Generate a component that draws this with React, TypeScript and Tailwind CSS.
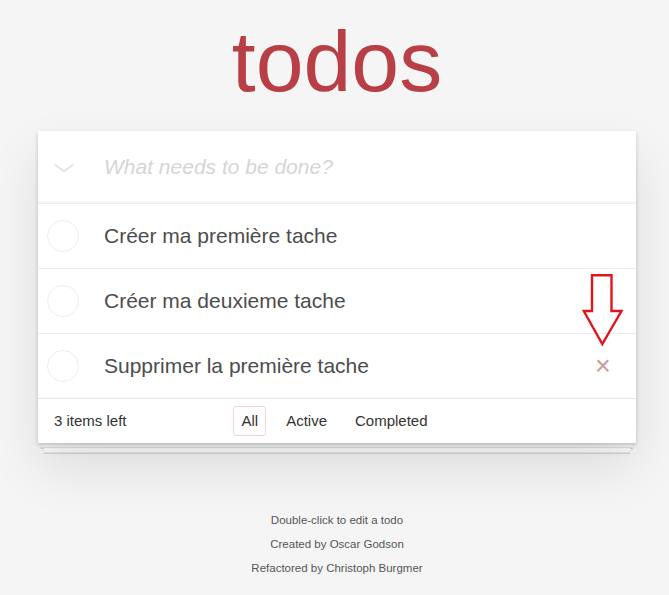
import React from "react";

const todos = [
  "Créer ma première tache",
  "Créer ma deuxieme tache",
  "Supprimer la première tache",
];

function Chevron() {
  return (
    <svg width="20" height="10" viewBox="0 0 20 10" fill="none">
      <path d="M1 1.5 L10 8.5 L19 1.5" stroke="#e3e3e3" strokeWidth="1.6" />
    </svg>
  );
}

function Arrow() {
  // red outline arrow pointing at the delete button
  return (
    <svg
      className="absolute left-[542px] top-[141px] z-20 pointer-events-none"
      width="45"
      height="80"
      viewBox="0 0 45 80"
      fill="none">
      <polygon
        points="12,3.2 31.5,3.2 31.5,39 41.5,39 22.3,72 3.8,39 12,39"
        stroke="#e0161e"
        strokeWidth="2.4"
        strokeLinejoin="miter"
      />
    </svg>
  );
}

export default function App() {
  return (
    <div className="min-h-[595px] bg-[#f5f5f5] pl-[5px] font-['Liberation_Sans',Arial,sans-serif]">
      <div className="mx-auto w-[598px] pt-[18px]">
        <h1 className="text-center text-[86px] leading-[86px] text-[#b83f45]">
          todos
        </h1>

        <div className="relative mt-[27px]">
          <div className="relative z-10 bg-white shadow-[0_2px_4px_rgba(0,0,0,0.2),0_25px_50px_rgba(0,0,0,0.1)]">
            <div className="flex h-[72px] items-center shadow-[inset_0_-2px_1px_rgba(0,0,0,0.03)]">
              <div className="ml-[16px] mr-[30px] flex w-[20px] justify-center pt-[2px]">
                <Chevron />
              </div>
              <span className="text-[21px] italic text-[#d5d5d5]">
                What needs to be done?
              </span>
            </div>

            <ul>
              {todos.map((t, i) => (
                <li
                  key={i}
                  className="flex h-[65px] items-center border-t border-[#ededed]">
                  <div className="ml-[9px] mr-[25px] h-[32px] w-[32px] rounded-full border border-[#eeeeee]" />
                  <span className="text-[21px] text-[#4d4d4d]">{t}</span>
                  {i === 2 && (
                    <span className="ml-auto mr-[13px] w-[40px] text-center text-[27px] leading-none text-[#cc9a9a]">
                      ×
                    </span>
                  )}
                </li>
              ))}
            </ul>

            <div className="grid h-[45px] grid-cols-[1fr_auto_1fr] items-center border-t border-[#e6e6e6] px-[16px] text-[15px] text-[#333]">
              <span>3 items left</span>
              <div className="mr-[5px] flex gap-[12px]">
                <span className="rounded-[3px] border border-[#efd5d6] px-[7px] py-[3px]">
                  All
                </span>
                <span className="border border-transparent px-[7px] py-[3px]">
                  Active
                </span>
                <span className="border border-transparent px-[7px] py-[3px]">
                  Completed
                </span>
              </div>
              <span />
            </div>
          </div>
          <div className="mx-[3px] h-[5px] border-b border-[#e2e2e2] bg-[#fcfcfc] shadow-[0_1px_1px_rgba(0,0,0,0.12)]" />
          <div className="mx-[6px] h-[5px] border-b border-[#e2e2e2] bg-[#fafafa] shadow-[0_1px_1px_rgba(0,0,0,0.12)]" />
          <Arrow />
        </div>

        <footer className="mt-[55px] text-center text-[11.5px] leading-[24px] text-[#555]">
          <p>Double-click to edit a todo</p>
          <p>Created by Oscar Godson</p>
          <p>Refactored by Christoph Burgmer</p>
        </footer>
      </div>
    </div>
  );
}
